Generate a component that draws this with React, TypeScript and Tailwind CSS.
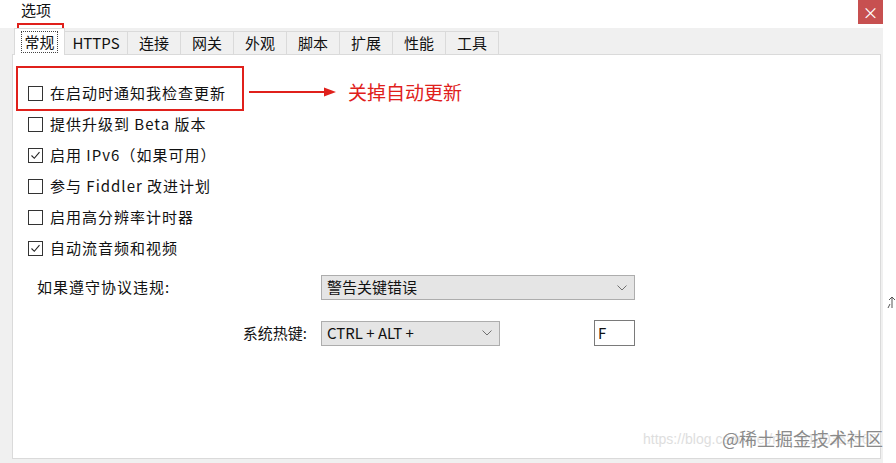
import React from "react";

const TABS = ["HTTPS", "连接", "网关", "外观", "脚本", "扩展", "性能", "工具"];

const OPTIONS = [
  { label: "在启动时通知我检查更新", checked: false },
  { label: "提供升级到 Beta 版本", checked: false },
  { label: "启用 IPv6（如果可用）", checked: true },
  { label: "参与 Fiddler 改进计划", checked: false },
  { label: "启用高分辨率计时器", checked: false },
  { label: "自动流音频和视频", checked: true },
];

function Checkbox({ checked }: { checked: boolean }) {
  return (
    <span className="flex h-[15px] w-[15px] shrink-0 items-center justify-center border border-[#333333] bg-white">
      {checked && (
        <svg width="11" height="11" viewBox="0 0 11 11" fill="none">
          <path d="M1.5 5.5 L4.3 8.3 L9.5 2.2" stroke="#222" strokeWidth="1.1" />
        </svg>
      )}
    </span>
  );
}

function Chevron() {
  return (
    <svg width="10" height="6" viewBox="0 0 10 6" fill="none">
      <path d="M0.5 0.5 L5 5 L9.5 0.5" stroke="#707070" strokeWidth="1" />
    </svg>
  );
}

function Select({ value, width }: { value: string; width: string }) {
  return (
    <div
      className={`flex h-[25px] ${width} items-center justify-between border border-[#adadad] bg-[#e5e5e5] pl-[5px] pr-[7px] text-[15px] text-[#111]`}
    >
      <span>{value}</span>
      <Chevron />
    </div>
  );
}

export default function App() {
  return (
    <div className="relative flex h-[463px] w-[896px] overflow-hidden bg-white font-['Noto_Sans_CJK_SC','Microsoft_YaHei',sans-serif] text-[#111]">
      <div className="flex w-[883px] flex-col">
        {/* title bar */}
        <div className="flex h-[28px] items-start justify-between bg-white">
          <span className="pl-[21px] pt-[1px] text-[15px] leading-[17px] text-[#111]">选项</span>
          <div className="flex h-[24px] w-[25px] items-center justify-center bg-[#c75050] text-[16px] leading-none text-white">
            ×
          </div>
        </div>

        {/* body */}
        <div className="flex flex-1 flex-col bg-[#f0f0f0] pl-[12px] pr-[2px] pb-[4px]">
          {/* tabs */}
          <div className="flex h-[26px] items-end">
            <div className="relative z-10 -mb-px ml-[2px] flex h-[27px] w-[51px] items-center justify-center border border-b-0 border-[#dadada] bg-white">
              <span className="border border-dotted border-[#444] px-[2px] text-[15px] leading-[20px]">常规</span>
            </div>
            {TABS.map((t) => (
              <div
                key={t}
                className={`flex h-[23px] items-center justify-center border border-l-0 border-b-0 border-[#dadada] bg-[#f0f0f0] text-[15px] ${
                  t === "HTTPS" ? "w-[63px]" : "w-[53px]"
                }`}
              >
                {t}
              </div>
            ))}
          </div>

          {/* panel */}
          <div className="flex flex-1 flex-col border border-[#dadada] bg-white pl-[15px] pt-[23px]">
            {OPTIONS.map((o) => (
              <div key={o.label} className="flex h-[31px] items-center gap-[7px]">
                <Checkbox checked={o.checked} />
                <span className="text-[15px] tracking-[1px]">{o.label}</span>
              </div>
            ))}

            <div className="mt-[11px] ml-[9px] flex items-center">
              <span className="w-[284px] text-[15px] tracking-[1px]">如果遵守协议违规:</span>
              <Select value="警告关键错误" width="w-[314px]" />
            </div>

            <div className="mt-[20px] ml-[9px] flex items-center">
              <span className="w-[284px] pr-[14px] text-right text-[15px]">系统热键:</span>
              <Select value="CTRL + ALT +" width="w-[179px]" />
              <div className="ml-[94px] flex h-[26px] w-[41px] items-center border border-[#7a7a7a] bg-white pl-[3px] text-[15px]">
                F
              </div>
            </div>
          </div>
        </div>
      </div>

      {/* right margin with cursor glyph */}
      <div className="relative flex-1 bg-white">
        <svg className="absolute left-[4px] top-[296px]" width="9" height="14" viewBox="0 0 9 14" fill="none">
          <path d="M5 1 L5 12 M2 4 L5 1 L8 4 M1 12 L3 8" stroke="#555" strokeWidth="1" />
        </svg>
      </div>

      {/* annotations */}
      <div className="pointer-events-none absolute left-[17px] top-[23px] h-[30px] w-[47px] border-2 border-[#e0201b]" />
      <div className="pointer-events-none absolute left-[16px] top-[66px] h-[45px] w-[228px] border-2 border-[#e0201b]" />
      <svg className="pointer-events-none absolute left-[248px] top-[86px]" width="90" height="12" viewBox="0 0 90 12">
        <line x1="1" y1="6" x2="78" y2="6" stroke="#e0201b" strokeWidth="2" />
        <path d="M76 1.5 L88 6 L76 10.5 Z" fill="#e0201b" />
      </svg>
      <span className="pointer-events-none absolute left-[348px] top-[78px] text-[19px] leading-[28px] text-[#e0201b]">
        关掉自动更新
      </span>

      {/* watermark */}
      <span className="pointer-events-none absolute left-[643px] top-[429px] text-[14px] leading-[20px] text-[#dedede] font-['Liberation_Sans',sans-serif]">
        https://blog.csdn.net/m0_5130352560
      </span>
      <span className="pointer-events-none absolute left-[722px] top-[426px] text-[18px] leading-[24px] text-[#8a8a8a] [text-shadow:0_0_2px_#fff]">
        @稀土掘金技术社区
      </span>
    </div>
  );
}
